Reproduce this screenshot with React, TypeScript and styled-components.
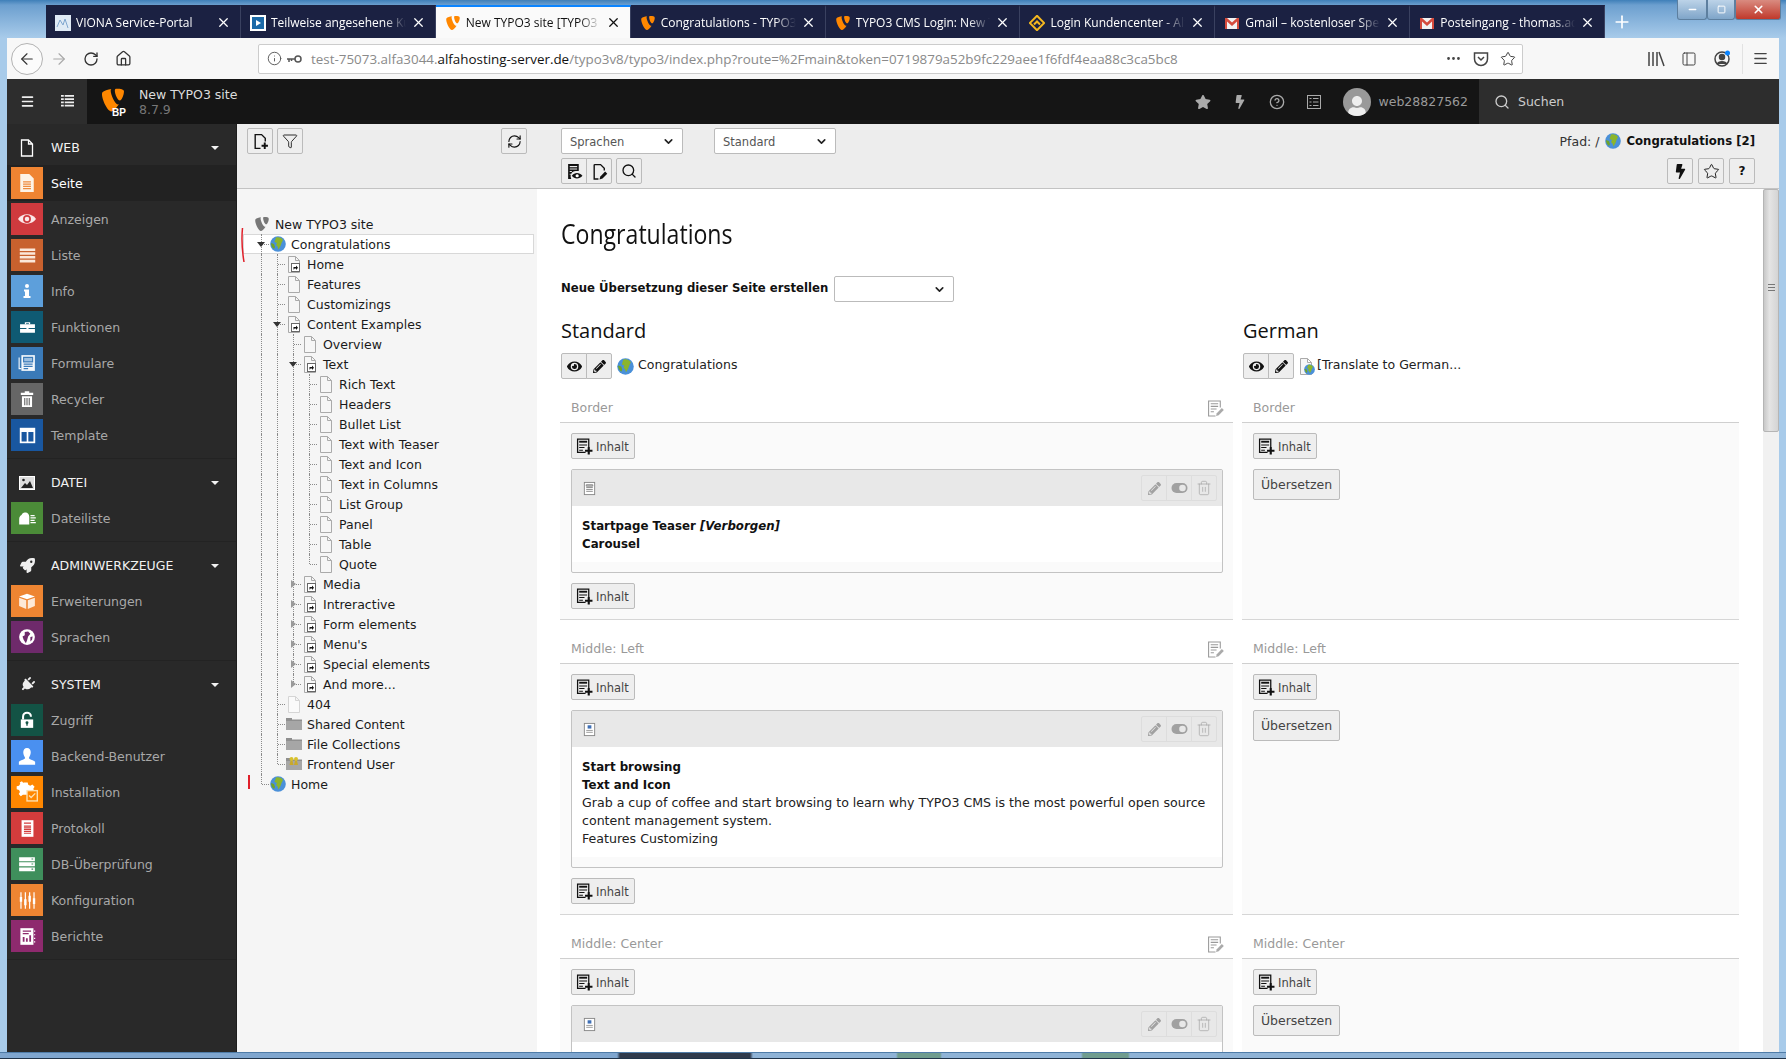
import React from 'react'
import styled, { createGlobalStyle } from 'styled-components'
import {
	ArrowLeft,
	ArrowRight,
	RotateCw,
	Home,
	Info,
	Ellipsis,
	Star,
	PanelLeft,
	Menu,
	X,
	Plus,
	Search,
	Filter,
	RefreshCw,
	ChevronDown,
	CircleHelp,
	Trash2,
	Minus,
	Square,
} from 'lucide-react'
import {
	FaTypo3,
	FaRocket,
	FaPlug,
	FaEye,
	FaPencilAlt,
	FaBolt,
	FaStar,
	FaUser,
} from 'react-icons/fa'

const GlobalStyle = createGlobalStyle`
	html, body {
		margin: 0;
		padding: 0;
		background: #a9c8e6;
	}
	* {
		box-sizing: border-box;
	}
`

/* ---------- drawings ---------- */

const Svg: React.FC<{ size?: number; children: React.ReactNode; fill?: string }> = ({
	size = 16,
	children,
	fill = 'currentColor',
}) => (
	<svg width={size} height={size} viewBox="0 0 16 16" fill={fill} style={{ display: 'block' }}>
		{children}
	</svg>
)

const Globe = ({ size = 16 }: { size?: number }) => (
	<Svg size={size}>
		<circle cx="8" cy="8" r="7.800" fill="#4a90d9" />
		<path d="M6 1.500c3-1 6 .5 7 2.500l-1.500 3-1 3-2 3.500-1-3-1.500-1.500L7 7 4.500 6 6 1.500z" fill="#8bb52c" />
		<path d="M1 7l3 1 1 3-1 2c-2-1.500-3-3.500-3-6z" fill="#6fa32a" />
	</Svg>
)

const PageGlyph = ({ light, shortcut }: { light?: boolean; shortcut?: boolean }) => (
	<svg width="14" height="17" viewBox="0 0 14 17" style={{ display: 'block' }}>
		<path
			d="M1.500.5h7l4 4v12h-11z M8.500.5v4h4"
			fill={light ? '#fafafa' : '#f6f6f6'}
			stroke={light ? '#d5d5d5' : '#aaa'}
			strokeWidth="1"
		/>
		{shortcut && (
			<>
				<rect x="4.500" y="7.500" width="8" height="8" fill="#fff" stroke="#666" />
				<path d="M6.500 13.500v-2.500h2.500v-1.500l2 2.200-2 2.200v-1.500h-1.500l-.5 1z" fill="#111" />
			</>
		)}
	</svg>
)

const FolderGlyph = ({ users }: { users?: boolean }) => (
	<Svg>
		<path d="M0 2h6v1.500h10V14H0z" fill="#8f8f8f" />
		<path d="M0 5h16v9H0z" fill="#a6a6a6" />
		{users && (
			<>
				<circle cx="5.500" cy="3" r="2" fill="#d8c12c" />
				<circle cx="10" cy="3" r="2" fill="#d8c12c" />
				<path d="M3.500 9l1-4h2l1 4zM8 9l1-4h2l1 4z" fill="#c9a92a" />
			</>
		)}
	</Svg>
)

const ContentAdd = () => (
	<Svg size={17} fill="none">
		<path d="M9 13.500H1.500V1h10.500v7.500" stroke="#111" strokeWidth="1.200" />
		<path d="M3 3.500h7.500" stroke="#111" strokeWidth="1.800" />
		<path d="M3 6.500h7.500M3 9h5M3 11.500h3.500" stroke="#111" />
		<path d="M11 8.500h2V11h2.500v2H13v2.500h-2V13H8.500v-2H11z" fill="#111" />
	</Svg>
)

const EditSection = () => (
	<Svg size={17} fill="none">
		<path d="M12.500 7V1h-11v14H8" stroke="#999" />
		<path d="M3.500 3.500h7M3.500 6h7M3.500 8.500h5.500M3.500 11h3" stroke="#999" />
		<path d="M8.500 15l.7-2.500 4.800-5 1.800 1.800-4.800 5z" fill="#aaa" />
	</Svg>
)

const ViewDoc = () => (
	<Svg size={17}>
		<path d="M2 1h10v6.500H9a5 5 0 0 0-4 7.500H2z M3.500 2.800v1.200h7V2.800z M3.500 5.200v1h7v-1z M3.500 7.500v1h2v-1z M3.500 10v1h1v-1z" fill="#111" fillRule="evenodd" />
		<path d="M5.500 12c2.500-3.500 7-3.500 10 0-3 3.500-7.500 3.500-10 0z" fill="#111" />
		<circle cx="10.500" cy="12" r="1.500" fill="#fff" />
	</Svg>
)

const EditDoc = () => (
	<Svg size={17}>
		<path d="M3 1.500h6l3.500 3.500v2M3 1.500V15h4" fill="none" stroke="#111" strokeWidth="1.300" />
		<path d="M8 15.500l.8-2.800 4.500-4.700 2 2-4.500 4.700z" fill="#111" />
	</Svg>
)

const ContentType = ({ blue }: { blue?: boolean }) => (
	<Svg size={15}>
		<rect x="2.500" y="1.500" width="11" height="13" fill="#fff" stroke="#888" />
		{blue ? (
			<>
				<rect x="6" y="3.500" width="4" height="3.500" fill="#3f6fb5" />
				<path d="M4.500 9h7M4.500 11h7" stroke="#999" />
			</>
		) : (
			<path d="M4.500 4h7v1.500h-7zM4.500 7h7M4.500 9h7M4.500 11h7" stroke="#888" fill="#ccc" />
		)}
	</Svg>
)

const TogglePill = () => (
	<svg width="17" height="12" viewBox="0 0 17 12" style={{ display: 'block' }}>
		<rect x="0.500" y="1" width="16" height="10" rx="5" fill="#9a9a9a" />
		<circle cx="11.500" cy="6" r="3.300" fill="#e8e8e8" />
	</svg>
)

const moduleIcons: Record<string, React.ReactNode> = {
	seite: (
		<Svg size={18}>
			<path d="M2 0h8l4 4v12H2z" fill="#fdf3e6" />
			<path d="M4.500 7h7M4.500 9h7M4.500 11h7M4.500 13h7" stroke="#ee8a3c" />
		</Svg>
	),
	eye: (
		<Svg size={18}>
			<path d="M0 8c3.500-5.500 12.500-5.500 16 0-3.500 5.500-12.500 5.500-16 0z" fill="#fbe9ea" />
			<path d="M4.500 8a3.500 3.500 0 1 1 7 0 3.500 3.500 0 0 1-7 0z" fill="#cf3a3e" />
			<circle cx="8" cy="8" r="2" fill="#fbe9ea" />
		</Svg>
	),
	list: (
		<Svg size={19}>
			<path d="M1.500 2h13v2.200h-13zM1.500 5.200h13v2.200h-13zM1.500 8.400h13v2.200h-13zM1.500 11.600h13v2.200h-13z" fill="#fbe8da" />
		</Svg>
	),
	info: (
		<Svg size={16}>
			<circle cx="8" cy="3" r="2" fill="#fff" />
			<path d="M5 6.500h5V13h1.500v2h-7v-2H6V8.500H5z" fill="#fff" />
		</Svg>
	),
	tools: (
		<Svg size={17}>
			<path d="M1 5h14v3.500H1zM1 9.500h14V13H1z" fill="#fff" />
			<path d="M5.500 5V3h5v2H9.300V4H6.700v1zM7 7.500h2V10H7z" fill="#fff" />
		</Svg>
	),
	form: (
		<Svg size={18}>
			<path d="M3 1h12v14H3z" fill="#f4f8fc" />
			<path d="M1 3v10h2" stroke="#f4f8fc" fill="none" />
			<path d="M5 3h8v4H5zM5 9h8M5 11h8M5 13h4" stroke="#3a7ab8" fill="#9dc0e2" />
		</Svg>
	),
	trash: (
		<Svg size={18}>
			<path d="M2.500 2.500h11v2h-11zM6 1h4v1.500H6zM3.500 5.500h9V15h-9z" fill="#fff" />
			<path d="M6 7v6.500M8 7v6.500M10 7v6.500" stroke="#666" />
		</Svg>
	),
	template: (
		<Svg size={19}>
			<path d="M1.500 1.500h13v13h-13z" fill="#fff" />
			<path d="M3 5h4.300v8H3zM8.700 5H13v8H8.700z" fill="#1957a0" />
		</Svg>
	),
	files: (
		<Svg size={19}>
			<path d="M1 13V8.500C1 6.500 2 5.500 3 5c.5-1.500 2-2.500 3.500-2 1.500 0 3 1.500 3 3.500v6.500z" fill="#fff" />
			<path d="M10.500 5.500H14M10.500 7.500H15M10.500 9.500H14M10.500 11.500H15" stroke="#fff" />
		</Svg>
	),
	box: (
		<Svg size={18}>
			<path d="M1 4l7-2.500L15 4l-7 2.500z" fill="#fff" />
			<path d="M1 5l6.300 2.300V15L1 12.500zM15 5L8.700 7.300V15L15 12.500z" fill="#fde9d8" />
		</Svg>
	),
	globe: (
		<Svg size={18}>
			<path d="M8 1a7 7 0 1 0 0 14A7 7 0 0 0 8 1z" fill="#fff" />
			<path d="M6 3.500l3-.5 2 2-2 2.500L8 11l-1 2.500-2-3-1-3 2-1z" fill="#6e2a6b" />
			<path d="M11 8l2-.5-.5 3L11 12z" fill="#6e2a6b" />
		</Svg>
	),
	lock: (
		<Svg size={18}>
			<path d="M2.500 7.500h11V15h-11z" fill="#fff" />
			<path d="M4.500 7.500V5a3.500 3.500 0 0 1 7 0" fill="none" stroke="#fff" strokeWidth="1.800" />
			<circle cx="8" cy="10.500" r="1.300" fill="#135345" />
			<path d="M7.400 11h1.200v2H7.400z" fill="#135345" />
		</Svg>
	),
	user: (
		<Svg size={20}>
			<path d="M8 1.500c2 0 3 1.500 3 3.500 0 2-1 3.500-1.500 4.500 0 1 3 1.500 5 3V15h-13v-2.500c2-1.500 5-2 5-3C6 8.500 5 7 5 5c0-2 1-3.500 3-3.500z" fill="#fff" />
		</Svg>
	),
	gear: (
		<Svg size={22}>
			<path d="M6 1h2.500l.4 1.700 1.500.7 1.500-.9 1.600 1.600-.9 1.500.3.900H8.500v3.500H5L3.500 11 2 9.500l.9-1.500-.7-1.500L.5 6V3.800l1.700-.4.9-1.400-.4-1 1.600-.8.9 1.100z" fill="#fff" />
			<rect x="8" y="7" width="7.500" height="7.500" fill="#ff8700" stroke="#fde0b0" />
			<path d="M9.500 10.500l1.500 1.500 3-3" fill="none" stroke="#fde0b0" />
		</Svg>
	),
	log: (
		<Svg size={19}>
			<path d="M3 1h10v14H3z" fill="#fff" />
			<path d="M5 3.500h6M5 6h6M5 7.500h6M5 9h6M5 10.500h6M5 12h6" stroke="#d33c3c" />
		</Svg>
	),
	db: (
		<Svg size={18}>
			<path d="M1 2h14v3.500H1zM1 6.500h14V10H1zM1 11h14v3.500H1z" fill="#fff" />
			<path d="M12 3.500h1.500M12 8h1.500M12 12.500h1.500" stroke="#3f8f5c" />
		</Svg>
	),
	sliders: (
		<Svg size={19}>
			<path d="M2.500 1v14M6.200 1v14M9.800 1v14M13.500 1v14" stroke="#fff" />
			<path d="M1.500 5h2v4h-2zM5.200 7h2v5h-2zM8.800 4h2v5h-2zM12.500 6h2v5h-2z" fill="#fff" />
		</Svg>
	),
	report: (
		<Svg size={19}>
			<path d="M2 1h11v14H2z" fill="#fff" />
			<path d="M4 3.500h7M4 5.500h5" stroke="#8e2a6e" />
			<path d="M4 12.500V8.500h1.500v4zM6.700 12.500v-3h1.500v3zM9.500 12.500V7H11v5.500z" fill="#8e2a6e" />
			<path d="M14 3v1M14 6v1M14 9v1M14 12v1" stroke="#fff" />
		</Svg>
	),
}

/* ---------- window chrome ---------- */

const Glass = styled.div`
	width: 1786px;
	height: 1059px;
	overflow: hidden;
	display: flex;
	flex-direction: column;
	padding: 0 7px;
	background: linear-gradient(180deg, #3f7fb8 0, #6c9fcf 5px, #a8cbea 38px, #a8cbea 100%);
	font-family: 'DejaVu Sans', Verdana, sans-serif;
	color: #111;
`

const BottomEdge = styled.div`
	height: 7px;
	flex: none;
	margin: 0 -7px;
	border-top: 1px solid #4f7ca8;
	border-bottom: 1px solid #20344a;
	background: linear-gradient(
		90deg,
		#7fa6cf 0,
		#7fa6cf 617px,
		#2f3a4c 620px,
		#2f3a4c 750px,
		#8fb3d6 753px,
		#8fb3d6 896px,
		#6f9c8e 898px,
		#6f9c8e 940px,
		#8fb3d6 942px,
		#8fb3d6 1081px,
		#6f9c8e 1083px,
		#6f9c8e 1128px,
		#8fb3d6 1130px,
		#8fb3d6 100%
	);
`

const TabRow = styled.div`
	height: 38px;
	flex: none;
	display: flex;
	align-items: flex-end;
	padding-left: 39px;
`

const Tab = styled.div<{ $active?: boolean }>`
	width: 194.900px;
	height: 33px;
	flex: none;
	display: flex;
	align-items: center;
	padding: 0 9px 0 9px;
	gap: 5px;
	background: ${p => (p.$active ? '#fafafa' : '#1b2142')};
	color: ${p => (p.$active ? '#111' : '#fff')};
	border-top: 2px solid ${p => (p.$active ? '#0a84ff' : '#1b2142')};
	border-right: 1px solid #3a4160;
	font: 12px 'Open Sans', 'Noto Sans', sans-serif;
`

const TabTitle = styled.span`
	flex: 1;
	min-width: 0;
	white-space: nowrap;
	mask-image: linear-gradient(90deg, #000 84%, transparent 100%);
`

const Favicon = styled.span`
	width: 16px;
	height: 16px;
	flex: none;
	display: flex;
	align-items: center;
	justify-content: center;
`

const NewTab = styled.div`
	width: 33px;
	height: 33px;
	display: flex;
	align-items: center;
	justify-content: center;
	color: #fff;
`

const WindowControls = styled.div`
	margin-left: auto;
	align-self: flex-start;
	display: flex;
	height: 20px;
	margin-right: -2px;
`

const WinButton = styled.div<{ $w: number; $close?: boolean }>`
	width: ${p => p.$w}px;
	display: flex;
	align-items: center;
	justify-content: center;
	color: #fff;
	border: 1px solid #5d7f9f;
	border-top: 0;
	border-radius: 0 0 3px 3px;
	background: ${p =>
		p.$close
			? 'linear-gradient(180deg, #d98b80, #c0392b)'
			: 'linear-gradient(180deg, #bcd3e8, #7fa5c9)'};
`

const NavBar = styled.div`
	height: 41px;
	flex: none;
	background: #f7f7f7;
	display: flex;
	align-items: center;
	color: #333;
`

const NavBack = styled.div`
	width: 32px;
	height: 32px;
	margin-left: 4px;
	border: 1px solid #b3b3b3;
	border-radius: 50%;
	background: #fbfbfb;
	display: flex;
	align-items: center;
	justify-content: center;
`

const NavIcon = styled.div<{ $w?: number; $dim?: boolean }>`
	width: ${p => p.$w ?? 32}px;
	display: flex;
	justify-content: center;
	flex: none;
	color: ${p => (p.$dim ? '#a8a8a8' : '#333')};
`

const UrlBar = styled.div`
	width: 1265px;
	height: 30px;
	margin-left: 119px;
	flex: none;
	background: #fff;
	border: 1px solid #ccc;
	border-radius: 2px;
	display: flex;
	align-items: center;
	padding: 0 6px 0 8px;
	font: 13.400px 'Open Sans', 'Noto Sans', sans-serif;
	color: #8a8a8a;
`

const UrlIcons = styled.div`
	display: flex;
	align-items: center;
	gap: 4px;
	margin-right: 9px;
	color: #555;
`

const UrlHost = styled.span`
	color: #111;
`

const UrlEnd = styled.div`
	margin-left: auto;
	display: flex;
	align-items: center;
	gap: 11px;
	color: #444;
`

const NavRight = styled.div`
	flex: 1;
	display: flex;
	align-items: center;
	justify-content: flex-end;
	gap: 16px;
	padding-right: 10px;
	color: #444;
`

const NavDivider = styled.span`
	width: 1px;
	height: 30px;
	background: #e2e2e2;
	margin: 0 -7px 0 -5px;
`

/* ---------- typo3 top bar ---------- */

const TopBar = styled.div`
	height: 45px;
	flex: none;
	background: #151515;
	display: flex;
	align-items: center;
	color: #bbb;
`

const TopLeft = styled.div`
	width: 80px;
	height: 100%;
	background: #2d2d2d;
	display: flex;
	align-items: center;
	color: #eee;
`

const TopToggle = styled.div`
	width: 40px;
	display: flex;
	justify-content: center;
`

const LogoBox = styled.div`
	position: relative;
	width: 24px;
	height: 30px;
	margin-left: 13px;
	color: #ff8700;
`

const LogoMark = styled.span`
	position: absolute;
	right: -2px;
	bottom: -1px;
	color: #fff;
	font: bold 10px 'Liberation Sans', sans-serif;
`

const SiteName = styled.div`
	margin-left: 15px;
	font-size: 12.500px;
	line-height: 15px;
	color: #ddd;
`

const SiteVersion = styled.div`
	color: #777;
`

const TopRight = styled.div`
	margin-left: auto;
	display: flex;
	align-items: center;
	height: 100%;
`

const TopIcon = styled.div`
	width: 37px;
	display: flex;
	justify-content: center;
	color: #aaa;
`

const Avatar = styled.div`
	width: 28px;
	height: 28px;
	margin-left: 10px;
	border-radius: 50%;
	background: #999;
	color: #eee;
	display: flex;
	align-items: flex-end;
	justify-content: center;
	overflow: hidden;
`

const UserName = styled.span`
	margin: 0 11px 0 8px;
	font-size: 12.500px;
	color: #9a9a9a;
`

const TopSearch = styled.div`
	width: 300px;
	height: 100%;
	background: #2d2d2d;
	display: flex;
	align-items: center;
	gap: 8px;
	padding-left: 15px;
	font-size: 12.500px;
	color: #ccc;
`

/* ---------- backend ---------- */

const Backend = styled.div`
	flex: 1;
	min-height: 0;
	display: flex;
`

const Sidebar = styled.nav`
	width: 230px;
	flex: none;
	background: #292929;
	border-right: 1px solid #1d1d1d;
`

const Group = styled.div`
	padding: 6px 0 5px;
	border-bottom: 1px solid #232323;
`

const GroupHead = styled.div`
	height: 35px;
	display: flex;
	align-items: center;
	padding-left: 4px;
	color: #f2f2f2;
	font-size: 12.500px;
`

const GroupIcon = styled.span`
	width: 32px;
	display: flex;
	justify-content: center;
	margin-right: 8px;
`

const TiltedPlug = styled(FaPlug)`
	transform: rotate(45deg);
`

const Caret = styled.span`
	margin-left: auto;
	margin-right: 17px;
	width: 0;
	height: 0;
	border: 4px solid transparent;
	border-top-color: #f2f2f2;
	border-bottom: 0;
`

const ModuleRow = styled.div<{ $active?: boolean }>`
	height: 36px;
	display: flex;
	align-items: center;
	padding-left: 4px;
	gap: 8px;
	font-size: 12.500px;
	color: ${p => (p.$active ? '#fff' : '#a8a8a8')};
	background: ${p => (p.$active ? '#222' : 'transparent')};
`

const ModuleTile = styled.span<{ $color: string }>`
	width: 32px;
	height: 32px;
	flex: none;
	background: ${p => p.$color};
	display: flex;
	align-items: center;
	justify-content: center;
`

const TreeColumn = styled.div`
	width: 300px;
	flex: none;
	display: flex;
	flex-direction: column;
	background: #f5f5f5;
`

const TreeBar = styled.div`
	height: 65px;
	flex: none;
	background: #ededed;
	border-bottom: 1px solid #c3c3c3;
	display: flex;
	align-items: flex-start;
	gap: 4px;
	padding: 4px 10px 0 10px;
`

const TreeBody = styled.div`
	position: relative;
	flex: 1;
	padding: 25px 0 0 16px;
	font-size: 12.500px;
`

const Scribble = styled.svg`
	position: absolute;
	left: 0;
	top: 0;
`

const TreeRow = styled.div<{ $selected?: boolean }>`
	height: 20px;
	display: flex;
	align-items: center;
	white-space: nowrap;
	color: #1a1a1a;
	margin: ${p => (p.$selected ? '0 3px 0 -10px' : '0')};
	padding-left: ${p => (p.$selected ? '10px' : '0')};
	background: ${p => (p.$selected ? '#fff' : 'transparent')};
	box-shadow: ${p => (p.$selected ? 'inset 0 0 0 1px #d8d8d8' : 'none')};
`

const Guide = styled.span<{ $line?: boolean; $branch?: boolean; $last?: boolean }>`
	position: relative;
	width: 16px;
	height: 20px;
	flex: none;
	&::before {
		content: '';
		display: ${p => (p.$line || p.$branch ? 'block' : 'none')};
		position: absolute;
		left: 8px;
		top: 0;
		bottom: ${p => (p.$last ? '10px' : '0')};
		border-left: 1px dotted #8a8a8a;
	}
	&::after {
		content: '';
		display: ${p => (p.$branch ? 'block' : 'none')};
		position: absolute;
		left: 9px;
		right: 0;
		top: 10px;
		border-top: 1px dotted #8a8a8a;
	}
`

const TreeArrow = styled.span<{ $open?: boolean }>`
	position: absolute;
	z-index: 1;
	left: ${p => (p.$open ? '4px' : '6px')};
	top: ${p => (p.$open ? '8px' : '6px')};
	width: 0;
	height: 0;
	border-style: solid;
	border-color: transparent;
	${p =>
		p.$open
			? 'border-width: 5px 4px 0; border-top-color: #333;'
			: 'border-width: 4px 0 4px 5px; border-left-color: #999;'}
`

const TreeIcon = styled.span`
	width: 16px;
	height: 18px;
	margin: 0 5px 0 1px;
	flex: none;
	display: flex;
	align-items: center;
	justify-content: center;
`

const ContentColumn = styled.div`
	flex: 1;
	min-width: 0;
	display: flex;
	flex-direction: column;
	background: #fff;
`

const DocHeader = styled.div`
	height: 65px;
	flex: none;
	background: #ededed;
	border-bottom: 1px solid #c3c3c3;
	padding: 4px 24px 0;
	display: flex;
	flex-direction: column;
	gap: 4px;
`

const DocRow = styled.div`
	display: flex;
	align-items: center;
	gap: 4px;
`

const Selectish = styled.div<{ $w: number; $after?: number }>`
	width: ${p => p.$w}px;
	height: 26px;
	margin-right: ${p => p.$after ?? 0}px;
	background: #fff;
	border: 1px solid #bbb;
	border-radius: 2px;
	display: flex;
	align-items: center;
	justify-content: space-between;
	padding: 1px 7px 0 8px;
	font-size: 11.500px;
	font-weight: normal;
	color: #555;
`

const PathBox = styled.div`
	margin-left: auto;
	font-size: 12.500px;
	color: #333;
	display: flex;
	align-items: center;
	gap: 5.500px;
`

const PathName = styled.strong`
	color: #111;
	font-size: 11.700px;
`

const Btn = styled.div<{ $w?: number; $plain?: boolean }>`
	width: ${p => p.$w ?? 26}px;
	height: 26px;
	flex: none;
	display: flex;
	align-items: center;
	justify-content: center;
	background: ${p => (p.$plain ? '#f0f0f0' : '#eee')};
	border: 1px solid #bbb;
	border-radius: 2px;
	color: #111;
`

const BtnGroup = styled.div`
	display: flex;
	${Btn} {
		border-radius: 0;
	}
	${Btn} + ${Btn} {
		margin-left: -1px;
	}
	${Btn}:first-child {
		border-radius: 2px 0 0 2px;
	}
	${Btn}:last-child {
		border-radius: 0 2px 2px 0;
	}
`

const RightButtons = styled.div`
	margin-left: auto;
	display: flex;
	gap: 5px;
`

const Spacer = styled.div`
	flex: 1;
`

const HelpMark = styled.span`
	font: bold 12px 'DejaVu Sans', sans-serif;
`

const ScrollArea = styled.div`
	flex: 1;
	min-height: 0;
	display: flex;
`

const PageBody = styled.div`
	flex: 1;
	min-width: 0;
	overflow: hidden;
	padding-left: 23px;
`

const Scrollbar = styled.div`
	width: 16px;
	flex: none;
	background: #f1f1f1;
`

const ScrollThumb = styled.div`
	height: 243px;
	padding-top: 94px;
	background: linear-gradient(90deg, #c8c8c8, #e4e4e4 40%, #d4d4d4);
	border: 1px solid #b5b5b5;
	border-radius: 2px;
	display: flex;
	flex-direction: column;
	align-items: center;
	gap: 2px;
`

const Grip = styled.span`
	width: 7px;
	height: 1px;
	flex: none;
	background: #777;
`

const PageTitle = styled.h1`
	margin: 28px 0 0 1px;
	height: 34px;
	font: 400 27px/34px 'Open Sans', sans-serif;
	color: #111;
	transform: scaleX(0.855);
	transform-origin: left center;
`

const TranslateRow = styled.div`
	display: flex;
	align-items: center;
	gap: 6px;
	margin: 25px 0 0 1px;
	font-size: 11.700px;
	font-weight: bold;
`

const RaisedLabel = styled.span`
	padding-bottom: 3px;
`

const LangGrid = styled.div`
	display: grid;
	grid-template-columns: 673px 497px;
	column-gap: 9px;
	margin-top: 14px;
`

const LangHead = styled.div`
	padding-left: 1px;
`

const LangName = styled.h2`
	margin: 0;
	height: 30px;
	font: 400 20px/30px 'Open Sans', sans-serif;
	color: #111;
`

const LangPage = styled.div`
	margin-top: 7px;
	display: flex;
	align-items: center;
	font-size: 12.500px;
	color: #222;
`

const LangIcon = styled.span`
	position: relative;
	margin: 0 4px 0 5px;
	display: flex;
`

const LangIconBadge = styled.span`
	position: absolute;
	right: -2px;
	bottom: 0;
	display: flex;
`

const SectionRows = styled.div`
	display: grid;
	grid-template-columns: 673px 497px;
	column-gap: 9px;
`

const Section = styled.section`
	display: flex;
	flex-direction: column;
`

const SectionTitle = styled.div`
	height: 44px;
	flex: none;
	border-bottom: 1px solid #cfcfcf;
	padding: 0 9px 5px 11px;
	display: flex;
	align-items: flex-end;
	justify-content: space-between;
	font-size: 12.500px;
	line-height: 18px;
	color: #999;
`

const SectionBody = styled.div`
	flex: 1;
	background: #fafafa;
	border-bottom: 1px solid #d6d6d6;
	padding: 10px 10px 10px 11px;
	display: flex;
	flex-direction: column;
	align-items: flex-start;
	gap: 10px;
`

const AddButton = styled.div`
	height: 26px;
	width: 64px;
	display: flex;
	align-items: center;
	gap: 3px;
	padding: 1px 0 0 4px;
	background: #eee;
	border: 1px solid #bbb;
	border-radius: 2px;
	font-size: 11.500px;
	color: #444;
`

const TranslateButton = styled.div`
	height: 31px;
	width: 87px;
	display: flex;
	align-items: center;
	justify-content: center;
	background: #eee;
	border: 1px solid #bbb;
	border-radius: 2px;
	font-size: 12.500px;
	color: #444;
`

const Card = styled.div`
	width: 652px;
	background: #fafafa;
	border: 1px solid #c3c3c3;
	border-radius: 2px;
`

const CardHead = styled.div`
	height: 36px;
	background: #e8e8e8;
	display: flex;
	align-items: center;
	justify-content: space-between;
	padding: 0 5px 0 10px;
`

const CardBody = styled.div`
	background: #fff;
	min-height: 56px;
	padding: 11px 10px 9px;
	font-size: 12.600px;
	line-height: 18px;
	color: #222;
	margin-bottom: 10px;
`

const CardStrong = styled.div`
	font-weight: bold;
	font-size: 11.800px;
	color: #111;
`

const Muted = styled.div`
	display: flex;
	opacity: 0.9;
	${Btn} {
		background: #e8e8e8;
		border-color: #dcdcdc;
		color: #9a9a9a;
	}
`

/* ---------- data ---------- */

const tabs = [
	{ title: 'VIONA Service-Portal', icon: 'viona' },
	{ title: 'Teilweise angesehene Kur', icon: 'play' },
	{ title: 'New TYPO3 site [TYPO3 C', icon: 'typo3', active: true },
	{ title: 'Congratulations - TYPO3', icon: 'typo3' },
	{ title: 'TYPO3 CMS Login: New T', icon: 'typo3' },
	{ title: 'Login Kundencenter - Alf', icon: 'alfa' },
	{ title: 'Gmail – kostenloser Speic', icon: 'gmail' },
	{ title: 'Posteingang - thomas.ad', icon: 'gmail' },
]

const favicon = (kind: string) => {
	switch (kind) {
		case 'typo3':
			return <FaTypo3 size={16} color="#ff8700" />
		case 'viona':
			return (
				<Svg>
					<rect width="16" height="16" fill="#dfeaf5" />
					<path d="M2 12l3-7 3 5 2-6 3 9" fill="none" stroke="#7fa6cf" />
				</Svg>
			)
		case 'play':
			return (
				<Svg>
					<rect width="16" height="16" fill="#fff" />
					<rect x="2" y="2" width="12" height="12" fill="#1c6aa8" />
					<path d="M6 5l5 3-5 3z" fill="#fff" />
				</Svg>
			)
		case 'alfa':
			return (
				<Svg>
					<path d="M8 .8L15.200 8 8 15.200.8 8z" fill="none" stroke="#f5b81f" strokeWidth="2" />
					<path d="M5 9.500l3-3 3 3" fill="none" stroke="#f5b81f" strokeWidth="2" />
				</Svg>
			)
		default:
			return (
				<Svg>
					<rect x="1" y="3" width="14" height="11" fill="#f2f2f2" />
					<path d="M1 3h2l5 4.500L13 3h2v11h-2V6.500L8 11 3 6.500V14H1z" fill="#d54b3d" />
				</Svg>
			)
	}
}

const moduleGroups = [
	{
		label: 'WEB',
		icon: (
			<svg width="16" height="18" viewBox="0 0 16 18">
				<path d="M2.500 1h7l4 4v12h-11z M9.500 1v4h4" fill="none" stroke="#fff" strokeWidth="1.300" />
			</svg>
		),
		items: [
			['Seite', 'seite', '#ef8432'],
			['Anzeigen', 'eye', '#cf3a3e'],
			['Liste', 'list', '#c8612e'],
			['Info', 'info', '#5d9fdb'],
			['Funktionen', 'tools', '#0f5a73'],
			['Formulare', 'form', '#3a7ab8'],
			['Recycler', 'trash', '#666666'],
			['Template', 'template', '#1957a0'],
		],
	},
	{
		label: 'DATEI',
		icon: (
			<svg width="16" height="14" viewBox="0 0 16 14">
				<rect x="0.500" y="0.500" width="15" height="13" fill="#ddd" stroke="#fff" />
				<path d="M2 12l4-5 2 2 3-4 3 7z" fill="#222" />
				<circle cx="4.500" cy="4" r="1.300" fill="#222" />
			</svg>
		),
		items: [['Dateiliste', 'files', '#4b8b38']],
	},
	{
		label: 'ADMINWERKZEUGE',
		icon: <FaRocket size={15} color="#eee" />,
		items: [
			['Erweiterungen', 'box', '#ee8532'],
			['Sprachen', 'globe', '#6e2a6b'],
		],
	},
	{
		label: 'SYSTEM',
		icon: <TiltedPlug size={15} color="#eee" />,
		items: [
			['Zugriff', 'lock', '#135345'],
			['Backend-Benutzer', 'user', '#4a90f0'],
			['Installation', 'gear', '#ff8700'],
			['Protokoll', 'log', '#d33c3c'],
			['DB-Überprüfung', 'db', '#3f8f5c'],
			['Konfiguration', 'sliders', '#ee8532'],
			['Berichte', 'report', '#8e2a6e'],
		],
	},
]

interface Node {
	label: string
	kind?: 'globe' | 'page' | 'short' | 'light' | 'folder' | 'users'
	open?: boolean
	closed?: boolean
	selected?: boolean
	children?: Node[]
}

const leaf = (label: string): Node => ({ label, kind: 'page' })
const closed = (label: string): Node => ({ label, kind: 'short', closed: true })

const pageTree: Node[] = [
	{
		label: 'Congratulations',
		kind: 'globe',
		open: true,
		selected: true,
		children: [
			{ label: 'Home', kind: 'short' },
			leaf('Features'),
			leaf('Customizings'),
			{
				label: 'Content Examples',
				kind: 'short',
				open: true,
				children: [
					leaf('Overview'),
					{
						label: 'Text',
						kind: 'short',
						open: true,
						children: [
							'Rich Text',
							'Headers',
							'Bullet List',
							'Text with Teaser',
							'Text and Icon',
							'Text in Columns',
							'List Group',
							'Panel',
							'Table',
							'Quote',
						].map(leaf),
					},
					closed('Media'),
					closed('Intreractive'),
					closed('Form elements'),
					closed("Menu's"),
					closed('Special elements'),
					closed('And more...'),
				],
			},
			{ label: '404', kind: 'light' },
			{ label: 'Shared Content', kind: 'folder' },
			{ label: 'File Collections', kind: 'folder' },
			{ label: 'Frontend User', kind: 'users' },
		],
	},
	{ label: 'Home', kind: 'globe' },
]

const nodeIcon = (kind: Node['kind']) => {
	switch (kind) {
		case 'globe':
			return <Globe />
		case 'short':
			return <PageGlyph shortcut />
		case 'light':
			return <PageGlyph light />
		case 'folder':
			return <FolderGlyph />
		case 'users':
			return <FolderGlyph users />
		default:
			return <PageGlyph />
	}
}

const renderTree = (nodes: Node[], prefix: boolean[] = []): React.ReactNode[] =>
	nodes.flatMap((node, i) => {
		const last = i === nodes.length - 1
		return [
			<TreeRow key={prefix.length + node.label + i} $selected={node.selected}>
				{prefix.map((line, j) => (
					<Guide key={j} $line={line} />
				))}
				<Guide $branch $last={last}>
					{node.open && <TreeArrow $open />}
					{node.closed && <TreeArrow />}
				</Guide>
				<TreeIcon>{nodeIcon(node.kind)}</TreeIcon>
				{node.label}
			</TreeRow>,
			...(node.children ? renderTree(node.children, [...prefix, !last]) : []),
		]
	})

const CardActions = () => (
	<Muted>
		<BtnGroup>
			<Btn>
				<FaPencilAlt size={13} />
			</Btn>
			<Btn>
				<TogglePill />
			</Btn>
			<Btn>
				<Trash2 size={16} strokeWidth={1} />
			</Btn>
		</BtnGroup>
	</Muted>
)

const Add = () => (
	<AddButton>
		<ContentAdd />
		Inhalt
	</AddButton>
)

const ContentCard: React.FC<{ blue?: boolean; children?: React.ReactNode }> = ({ blue, children }) => (
	<Card>
		<CardHead>
			<ContentType blue={blue} />
			<CardActions />
		</CardHead>
		<CardBody>{children}</CardBody>
	</Card>
)

const LanguageRow: React.FC<{ title: string; children: React.ReactNode }> = ({ title, children }) => (
	<>
		<Section>
			<SectionTitle>
				{title}
				<EditSection />
			</SectionTitle>
			<SectionBody>{children}</SectionBody>
		</Section>
		<Section>
			<SectionTitle>{title}</SectionTitle>
			<SectionBody>
				<Add />
				<TranslateButton>Übersetzen</TranslateButton>
			</SectionBody>
		</Section>
	</>
)

export default function App() {
	return (
		<Glass>
			<GlobalStyle />
			<TabRow>
				{tabs.map(t => (
					<Tab key={t.title} $active={t.active}>
						<Favicon>{favicon(t.icon)}</Favicon>
						<TabTitle>{t.title}</TabTitle>
						<X size={15} strokeWidth={2} />
					</Tab>
				))}
				<NewTab>
					<Plus size={20} strokeWidth={2} />
				</NewTab>
				<WindowControls>
					<WinButton $w={30}>
						<Minus size={11} strokeWidth={3} />
					</WinButton>
					<WinButton $w={28}>
						<Square size={9} strokeWidth={2.500} />
					</WinButton>
					<WinButton $w={46} $close>
						<X size={13} strokeWidth={3} />
					</WinButton>
				</WindowControls>
			</TabRow>

			<NavBar>
				<NavBack>
					<ArrowLeft size={18} strokeWidth={1.500} />
				</NavBack>
				<NavIcon $dim>
					<ArrowRight size={18} strokeWidth={1.500} />
				</NavIcon>
				<NavIcon>
					<RotateCw size={16} strokeWidth={2} />
				</NavIcon>
				<NavIcon>
					<Home size={17} strokeWidth={1.800} />
				</NavIcon>
				<UrlBar>
					<UrlIcons>
						<Info size={15} strokeWidth={1.500} />
						<svg width="16" height="10" viewBox="0 0 16 10" fill="none" stroke="#555" strokeWidth="1.500">
							<circle cx="12" cy="5" r="3" />
							<path d="M9 5H1M3 5v3M5.500 5v2" />
						</svg>
					</UrlIcons>
					<span>
						test-75073.alfa3044.<UrlHost>alfahosting-server.de</UrlHost>
						/typo3v8/typo3/index.php?route=%2Fmain&amp;token=0719879a52b9fc229aee1f6fdf4eaa88c3ca5bc8
					</span>
					<UrlEnd>
						<Ellipsis size={17} />
						<svg width="16" height="16" viewBox="0 0 16 16" fill="none" stroke="#444" strokeWidth="1.500">
							<path d="M1.500 2h13v6a6.500 6.500 0 0 1-13 0z" />
							<path d="M5 6l3 3 3-3" />
						</svg>
						<Star size={16} strokeWidth={1.500} />
					</UrlEnd>
				</UrlBar>
				<NavRight>
					<svg width="18" height="16" viewBox="0 0 18 16" stroke="#444" strokeWidth="1.500" fill="none">
						<path d="M2 1v14M6 1v14M10 1v14M12 1l5 14" />
					</svg>
					<PanelLeft size={16} strokeWidth={1.500} />
					<svg width="18" height="18" viewBox="0 0 18 18" fill="none" stroke="#444" strokeWidth="1.500">
						<circle cx="9" cy="9" r="7" />
						<circle cx="9" cy="7" r="2.500" fill="#444" />
						<path d="M4.500 14c1-3 8-3 9 0" fill="#444" />
						<circle cx="14.500" cy="3" r="2.500" fill="#0a84ff" stroke="none" />
					</svg>
					<NavDivider />
					<Menu size={17} strokeWidth={1.800} />
				</NavRight>
			</NavBar>

			<TopBar>
				<TopLeft>
					<TopToggle>
						<Menu size={15} strokeWidth={2.500} />
					</TopToggle>
					<TopToggle>
						<svg width="13" height="15" viewBox="0 0 14 16" fill="#eee">
							<path d="M0 1h3v2H0zM4 1h10v2H4zM0 4.500h3v2H0zM4 4.500h10v2H4zM0 8h3v2H0zM4 8h10v2H4zM0 11.500h3v2H0zM4 11.500h10v2H4z" />
						</svg>
					</TopToggle>
				</TopLeft>
				<LogoBox>
					<FaTypo3 size={26} />
					<LogoMark>BP</LogoMark>
				</LogoBox>
				<SiteName>
					New TYPO3 site
					<SiteVersion>8.7.9</SiteVersion>
				</SiteName>
				<TopRight>
					<TopIcon>
						<FaStar size={16} />
					</TopIcon>
					<TopIcon>
						<FaBolt size={14} />
					</TopIcon>
					<TopIcon>
						<CircleHelp size={16} />
					</TopIcon>
					<TopIcon>
						<svg width="14" height="14" viewBox="0 0 14 14" fill="none" stroke="#aaa">
							<rect x="0.500" y="0.500" width="13" height="13" />
							<path d="M2.500 3.500h2M6 3.500h5.500M2.500 7h2M6 7h5.500M2.500 10.500h2M6 10.500h5.500" />
						</svg>
					</TopIcon>
					<Avatar>
						<FaUser size={20} />
					</Avatar>
					<UserName>web28827562</UserName>
					<TopSearch>
						<Search size={16} strokeWidth={2} />
						Suchen
					</TopSearch>
				</TopRight>
			</TopBar>

			<Backend>
				<Sidebar>
					{moduleGroups.map(g => (
						<Group key={g.label}>
							<GroupHead>
								<GroupIcon>{g.icon}</GroupIcon>
								{g.label}
								<Caret />
							</GroupHead>
							{g.items.map(([label, icon, color]) => (
								<ModuleRow key={label} $active={label === 'Seite'}>
									<ModuleTile $color={color}>{moduleIcons[icon]}</ModuleTile>
									{label}
								</ModuleRow>
							))}
						</Group>
					))}
				</Sidebar>

				<TreeColumn>
					<TreeBar>
						<Btn>
							<svg width="17" height="17" viewBox="0 0 16 16" fill="none" stroke="#111" strokeWidth="1.300">
								<path d="M8 14.500H3v-13h6l3.500 3.500v3" />
								<path d="M12 9v6M9 12h6" strokeWidth="1.800" />
							</svg>
						</Btn>
						<Btn>
							<Filter size={16} strokeWidth={1.300} />
						</Btn>
						<Spacer />
						<Btn>
							<RefreshCw size={15} strokeWidth={1.800} />
						</Btn>
					</TreeBar>
					<TreeBody>
						<Scribble width="30" height="600">
							<path d="M5.500 39c-1 10-.5 22 1.500 34" stroke="#e0202a" strokeWidth="1.500" fill="none" />
							<path d="M12 586v25" stroke="#e0202a" strokeWidth="2" fill="none" />
						</Scribble>
						<TreeRow>
							<TreeIcon>
								<FaTypo3 size={16} color="#777" />
							</TreeIcon>
							New TYPO3 site
						</TreeRow>
						{renderTree(pageTree)}
					</TreeBody>
				</TreeColumn>

				<ContentColumn>
					<DocHeader>
						<DocRow>
							<Selectish $w={122} $after={27}>
								Sprachen
								<ChevronDown size={13} strokeWidth={3} color="#222" />
							</Selectish>
							<Selectish $w={122}>
								Standard
								<ChevronDown size={13} strokeWidth={3} color="#222" />
							</Selectish>
							<PathBox>
								Pfad: / <Globe size={16} /> <PathName>Congratulations [2]</PathName>
							</PathBox>
						</DocRow>
						<DocRow>
							<BtnGroup>
								<Btn>
									<ViewDoc />
								</Btn>
								<Btn>
									<EditDoc />
								</Btn>
							</BtnGroup>
							<Btn>
								<Search size={16} strokeWidth={2} />
							</Btn>
							<RightButtons>
								<Btn>
									<FaBolt size={15} />
								</Btn>
								<Btn>
									<Star size={17} strokeWidth={1.300} />
								</Btn>
								<Btn>
									<HelpMark>?</HelpMark>
								</Btn>
							</RightButtons>
						</DocRow>
					</DocHeader>
					<ScrollArea>
						<PageBody>
							<PageTitle>Congratulations</PageTitle>
							<TranslateRow>
								<RaisedLabel>Neue Übersetzung dieser Seite erstellen</RaisedLabel>
								<Selectish $w={120}>
									<span />
									<ChevronDown size={13} strokeWidth={3} color="#222" />
								</Selectish>
							</TranslateRow>
							<LangGrid>
								<LangHead>
									<LangName>Standard</LangName>
									<LangPage>
										<BtnGroup>
											<Btn>
												<FaEye size={15} />
											</Btn>
											<Btn>
												<FaPencilAlt size={13} />
											</Btn>
										</BtnGroup>
										<LangIcon>
											<Globe size={17} />
										</LangIcon>
										<RaisedLabel>Congratulations</RaisedLabel>
									</LangPage>
								</LangHead>
								<LangHead>
									<LangName>German</LangName>
									<LangPage>
										<BtnGroup>
											<Btn>
												<FaEye size={15} />
											</Btn>
											<Btn>
												<FaPencilAlt size={13} />
											</Btn>
										</BtnGroup>
										<LangIcon>
											<PageGlyph />
											<LangIconBadge>
												<Globe size={11} />
											</LangIconBadge>
										</LangIcon>
										<RaisedLabel>[Translate to German...</RaisedLabel>
									</LangPage>
								</LangHead>
							</LangGrid>
							<SectionRows>
								<LanguageRow title="Border">
									<Add />
									<ContentCard>
										<CardStrong>
											Startpage Teaser <em>[Verborgen]</em>
										</CardStrong>
										<CardStrong>Carousel</CardStrong>
									</ContentCard>
									<Add />
								</LanguageRow>
								<LanguageRow title="Middle: Left">
									<Add />
									<ContentCard blue>
										<CardStrong>Start browsing</CardStrong>
										<CardStrong>Text and Icon</CardStrong>
										Grab a cup of coffee and start browsing to learn why TYPO3 CMS is the most powerful open
										source content management system.
										<br />
										Features Customizing
									</ContentCard>
									<Add />
								</LanguageRow>
								<LanguageRow title="Middle: Center">
									<Add />
									<ContentCard blue />
								</LanguageRow>
							</SectionRows>
						</PageBody>
						<Scrollbar>
							<ScrollThumb>
								<Grip />
								<Grip />
								<Grip />
							</ScrollThumb>
						</Scrollbar>
					</ScrollArea>
				</ContentColumn>
			</Backend>
			<BottomEdge />
		</Glass>
	)
}
